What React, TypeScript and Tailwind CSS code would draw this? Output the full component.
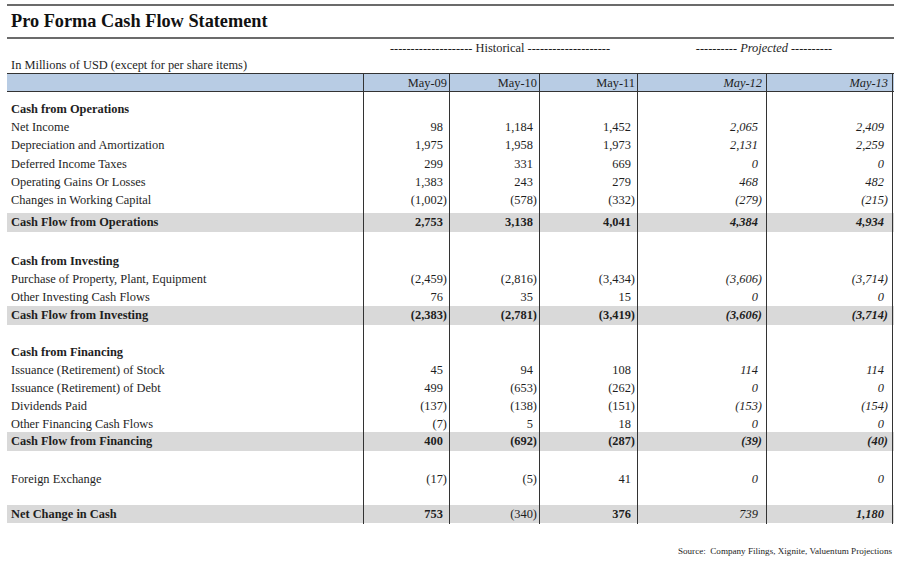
import React from "react";

type Row = {
  kind: "space" | "head" | "item" | "band";
  h: string;
  label?: string;
  vals?: string[];
  light?: number[];
};

const rows: Row[] = [
  { kind: "space", h: "h-[8px]" },
  { kind: "head", h: "h-[18.2px]", label: "Cash from Operations" },
  { kind: "item", h: "h-[18.2px]", label: "Net Income", vals: ["98", "1,184", "1,452", "2,065", "2,409"] },
  { kind: "item", h: "h-[18.2px]", label: "Depreciation and Amortization", vals: ["1,975", "1,958", "1,973", "2,131", "2,259"] },
  { kind: "item", h: "h-[18.2px]", label: "Deferred Income Taxes", vals: ["299", "331", "669", "0", "0"] },
  { kind: "item", h: "h-[18.2px]", label: "Operating Gains Or Losses", vals: ["1,383", "243", "279", "468", "482"] },
  { kind: "item", h: "h-[18.2px]", label: "Changes in Working Capital", vals: ["(1,002)", "(578)", "(332)", "(279)", "(215)"] },
  { kind: "space", h: "h-[3.8px]" },
  { kind: "band", h: "h-[19px]", label: "Cash Flow from Operations", vals: ["2,753", "3,138", "4,041", "4,384", "4,934"] },
  { kind: "space", h: "h-[20px]" },
  { kind: "head", h: "h-[18px]", label: "Cash from Investing" },
  { kind: "item", h: "h-[18px]", label: "Purchase of Property, Plant, Equipment", vals: ["(2,459)", "(2,816)", "(3,434)", "(3,606)", "(3,714)"] },
  { kind: "item", h: "h-[18px]", label: "Other Investing Cash Flows", vals: ["76", "35", "15", "0", "0"] },
  { kind: "band", h: "h-[19px]", label: "Cash Flow from Investing", vals: ["(2,383)", "(2,781)", "(3,419)", "(3,606)", "(3,714)"] },
  { kind: "space", h: "h-[18px]" },
  { kind: "head", h: "h-[18px]", label: "Cash from Financing" },
  { kind: "item", h: "h-[18px]", label: "Issuance (Retirement) of Stock", vals: ["45", "94", "108", "114", "114"] },
  { kind: "item", h: "h-[18px]", label: "Issuance (Retirement) of Debt", vals: ["499", "(653)", "(262)", "0", "0"] },
  { kind: "item", h: "h-[18px]", label: "Dividends Paid", vals: ["(137)", "(138)", "(151)", "(153)", "(154)"] },
  { kind: "item", h: "h-[17px]", label: "Other Financing Cash Flows", vals: ["(7)", "5", "18", "0", "0"] },
  { kind: "band", h: "h-[19px]", label: "Cash Flow from Financing", vals: ["400", "(692)", "(287)", "(39)", "(40)"] },
  { kind: "space", h: "h-[19px]" },
  { kind: "item", h: "h-[18px]", label: "Foreign Exchange", vals: ["(17)", "(5)", "41", "0", "0"] },
  { kind: "space", h: "h-[17px]" },
  { kind: "band", h: "h-[18.3px]", label: "Net Change in Cash", vals: ["753", "(340)", "376", "739", "1,180"], light: [1, 3] },
];

const grid = "grid grid-cols-[356px_86px_90px_98px_129px_127px]";

// accounting style: positives keep room for the closing paren
const Num = ({ v }: { v: string }) => (
  <span className="whitespace-pre">
    {v}
    {!v.startsWith("(") && <span className="invisible">)</span>}
  </span>
);

const cellClass = (i: number) => {
  const projected = i >= 3;
  return `flex items-center justify-end border-l border-[#333] ${
    projected ? "italic pr-[4px]" : "pr-[2px]"
  } ${i === 4 ? "border-r" : ""}`;
};

const TableRow = ({ row }: { row: Row }) => {
  const band = row.kind === "band";
  return (
    <div className={`${grid} ${row.h} ${band ? "bg-[#d9d9d9]" : ""}`}>
      <div
        className={`flex items-center pl-[4px] whitespace-nowrap ${
          row.kind === "head" || band ? "font-bold" : ""
        }`}
      >
        {row.label}
      </div>
      {[0, 1, 2, 3, 4].map((i) => (
        <div
          key={i}
          className={`${cellClass(i)} ${band && !row.light?.includes(i) ? "font-bold" : ""}`}
        >
          {row.vals && <Num v={row.vals[i]} />}
        </div>
      ))}
    </div>
  );
};

export default function App() {
  return (
    <div className="w-[900px] h-[561px] bg-white text-[#1e1e1e] [font-family:'Liberation_Serif','Times_New_Roman',serif] text-[12.4px] overflow-hidden">
      <div className="ml-[7px] w-[887px]">
        <div className="mt-[4px] h-[2px] bg-[#6b6b6b]" />
        <div className="h-[31px] flex items-center pl-[4px] pt-[1px] text-[18.3px] font-bold text-[#111]">
          Pro Forma Cash Flow Statement
        </div>
        <div className="h-[2px] bg-[#6b6b6b]" />

        <div className={`${grid} h-[19px] items-center`}>
          <div />
          <div className="col-span-3 text-center whitespace-pre">
            -------------------- Historical --------------------
          </div>
          <div className="col-span-2 text-center whitespace-pre pr-[2px]">
            ---------- <span className="italic">Projected</span> ----------
          </div>
        </div>

        <div className="h-[15px] flex items-end pl-[4px] leading-[15px]">
          In Millions of USD (except for per share items)
        </div>

        {/* column header */}
        <div className={`${grid} h-[19px] bg-[#b8cce4] border-y border-[#333]`}>
          <div />
          {["May-09", "May-10", "May-11", "May-12", "May-13"].map((m, i) => (
            <div key={m} className={cellClass(i)}>
              {m}
            </div>
          ))}
        </div>

        {rows.map((row, idx) => (
          <TableRow key={idx} row={row} />
        ))}

        <div className="mt-[22px] h-[14px] flex items-center justify-end pr-[2px] text-[9.1px] whitespace-pre">
          Source:  Company Filings, Xignite, Valuentum Projections
        </div>
      </div>
    </div>
  );
}
